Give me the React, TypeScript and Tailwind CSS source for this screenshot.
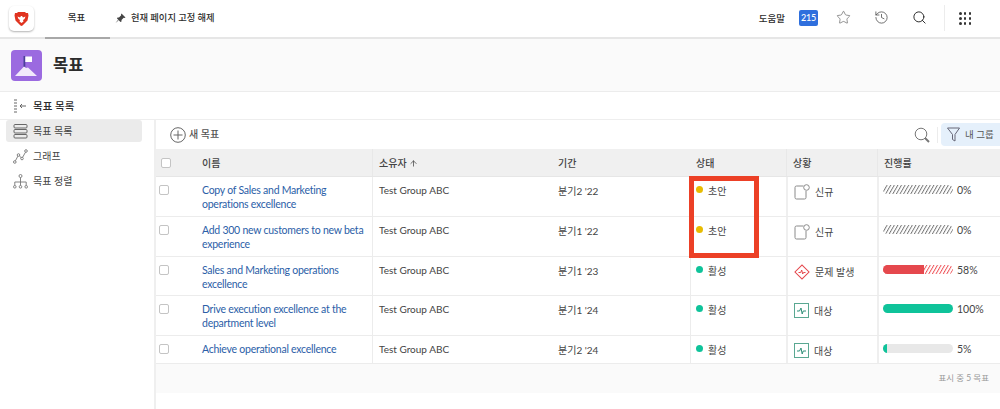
import React from "react";
import { Star, History, Search, ArrowUp } from "lucide-react";

const font = { fontFamily: '"Lato","Noto Sans CJK KR",sans-serif' };

const rows = [
  { name: ["Copy of Sales and Marketing", "operations excellence"], period: "분기2 '22", status: "초안", dot: "bg-[#e8bc00]", cond: "new", condText: "신규", pct: 0, h: "h-[40px]" },
  { name: ["Add 300 new customers to new beta", "experience"], period: "분기1 '22", status: "초안", dot: "bg-[#e8bc00]", cond: "new", condText: "신규", pct: 0, h: "h-[40px]" },
  { name: ["Sales and Marketing operations", "excellence"], period: "분기1 '23", status: "활성", dot: "bg-[#0fc39a]", cond: "risk", condText: "문제 발생", pct: 58, h: "h-[39px]" },
  { name: ["Drive execution excellence at the", "department level"], period: "분기1 '24", status: "활성", dot: "bg-[#0fc39a]", cond: "target", condText: "대상", pct: 100, h: "h-[40px]" },
  { name: ["Achieve operational excellence"], period: "분기2 '24", status: "활성", dot: "bg-[#0fc39a]", cond: "target", condText: "대상", pct: 5, h: "h-[28px]" },
];

function Cond({ kind }: { kind: string }) {
  if (kind === "new")
    return (
      <svg width="16" height="16" viewBox="0 0 16 16" fill="none" stroke="#8a8a8a" strokeWidth="1">
        <path d="M9.500 2H2.500A1.500 1.500 0 0 0 1 3.500v10A1.500 1.500 0 0 0 2.500 15h8a1.500 1.500 0 0 0 1.500-1.500V7" />
        <circle cx="12.500" cy="3.500" r="2.800" fill="#fff" />
      </svg>
    );
  if (kind === "risk")
    return (
      <svg width="16" height="16" viewBox="0 0 16 16" fill="none" stroke="#e5484d" strokeWidth="1">
        <rect x="3" y="3" width="10" height="10" transform="rotate(45 8 8)" />
        <path d="M4.500 8.500h2.200l1-2.500 1 4 .8-1.500h2" />
      </svg>
    );
  return (
    <svg width="15" height="15" viewBox="0 0 15 15" fill="none" stroke="#5aa892" strokeWidth="1">
      <rect x="0.500" y="0.500" width="14" height="14" />
      <path d="M3 8h2.500l1.500-3 1.200 6 1-3H12" stroke="#2f8f78" />
    </svg>
  );
}

function Hatch({ id, color }: { id: string; color: string }) {
  return (
    <svg className="absolute inset-0 w-full h-full" xmlns="http://www.w3.org/2000/svg">
      <defs>
        <pattern id={id} width="3.600" height="9" patternUnits="userSpaceOnUse" patternTransform="skewX(-30)">
          <rect width="1.100" height="9" fill={color} />
        </pattern>
      </defs>
      <rect width="100%" height="100%" fill={`url(#${id})`} />
    </svg>
  );
}

function Progress({ pct, i }: { pct: number; i: number }) {
  return (
    <div className="w-[70px] h-[9px] relative rounded-[5px] overflow-hidden shrink-0">
      {pct === 0 && <Hatch id={`h${i}`} color="#777777" />}
      {pct === 58 && (
        <>
          <Hatch id={`h${i}`} color="#ee4f55" />
          <div className="absolute left-0 top-0 bottom-0 w-[41px] bg-[#e5484d]" />
        </>
      )}
      {pct === 100 && <div className="absolute inset-0 bg-[#0fc39a]" />}
      {pct === 5 && (
        <>
          <div className="absolute inset-0 bg-[#e8e8e8]" />
          <div className="absolute left-0 top-0 bottom-0 w-[4px] bg-[#0fc39a]" />
        </>
      )}
    </div>
  );
}

function Check({ className }: { className: string }) {
  return <div className={`w-[10px] h-[10px] rounded-[2px] border border-[#c4c4c4] bg-white shrink-0 ${className}`} />;
}

export default function App() {
  return (
    <div style={font} className="w-[1000px] h-[409px] bg-white relative overflow-hidden text-[#2c2c2c]">
      {/* top bar */}
      <div className="h-[39px] flex items-stretch border-b-2 border-[#e6e6e6]">
        <div className="w-[45px] flex items-start pl-[9px] pt-[6px]">
          <div className="w-[25px] h-[25px] rounded-[5px] bg-white shadow-[0_1px_2px_rgba(0,0,0,0.3)] flex items-center justify-center">
            <svg width="15" height="16" viewBox="0 0 15 16">
              <path d="M4 1h7l1 1 2 0 .5 2.500-1 5L8.500 14.500 7.500 15l-1-.5L1.500 9.500l-1-5L1 2h2z" fill="#e03420" />
              <path d="M3.500 5.500L6 6.500 7 5l1 0 1 1.500 2.500-1-1 2.500-1.500 1 .5 1.500L7.500 12 5.500 10.500 6 9 4.500 8z" fill="#fff" />
            </svg>
          </div>
        </div>
        <div className="w-[65px] flex justify-center pt-[11px] pr-[2px] border-b-2 -mb-[2px] border-[#a8a8a8] text-[9.500px] font-medium leading-[14px]">목표</div>
        <div className="flex items-start pt-[11px] pl-[5px] gap-[5px] text-[9.250px] font-medium leading-[14px]">
          <svg width="11" height="11" viewBox="0 0 11 11" className="mt-[2px]" fill="#444">
            <path d="M6.500 0.500l4 4-1 .5-.8-.2L6.500 7 6.500 8.500 5.500 9 2 5.500 2.500 4.500 4 4.500 6.200 2.300 6 1.500z" />
            <path d="M3 7l-2.500 3L3.500 7.500z" />
          </svg>
          <span>현재 페이지 고정 해제</span>
        </div>
        <div className="flex-1" />
        <div className="flex items-start pt-[12px] text-[9.500px] font-medium leading-[14px]">도움말</div>
        <div className="w-[19px] h-[16px] ml-[14px] mt-[10px] bg-[#2f6fdd] rounded-[2px] text-white text-[9px] font-medium tracking-[-0.3px] flex items-center justify-center">215</div>
        <Star size={15} strokeWidth={1} className="ml-[18px] mt-[10px] text-[#555]" />
        <History size={15} strokeWidth={1.200} className="ml-[23px] mt-[10px] text-[#444]" />
        <Search size={15} strokeWidth={1.500} className="ml-[23px] mt-[10px] text-[#222]" />
        <div className="w-px h-[26px] bg-[#ececec] ml-[17px] mt-[5px]" />
        <div className="grid grid-cols-3 gap-[2.500px] w-[12px] h-[12px] ml-[14px] mt-[12px] mr-[29px]">
          {Array.from({ length: 9 }).map((_, i) => (
            <span key={i} className="w-[2.500px] h-[2.500px] bg-[#333] rounded-full" />
          ))}
        </div>
      </div>
      {/* title */}
      <div className="h-[53px] bg-[#fafafa] border-b border-[#ececec] flex items-center pl-[11px] gap-[11px]">
        <div className="w-[31px] h-[31px] rounded-[4px] bg-[#9b6ae0] flex items-center justify-center">
          <svg width="25" height="25" viewBox="0 0 25 25">
            <rect x="9.500" y="3" width="1.800" height="11" fill="#4b3f99" />
            <path d="M11.300 3.500h6.700v5.500h-6.700z" fill="#fff" />
            <path d="M1 23l9-9.500 2 1.500 2-.5 9 8.500z" fill="#f1e9fb" />
          </svg>
        </div>
        <div className="text-[16.500px] font-semibold leading-none">목표</div>
      </div>
      {/* crumb */}
      <div className="h-[28px] border-b border-[#eeeeee] flex items-center pl-[14px] gap-[6px]">
        <svg width="13" height="14" viewBox="0 0 13 14" fill="none" stroke="#666" strokeWidth="1">
          <path d="M0 1h3M0 4h3M0 7h3M0 10h3M0 13h3" />
          <path d="M12 7H6M8 5L6 7l2 2" />
        </svg>
        <span className="text-[10.500px] font-medium leading-none mt-[2px]">목표 목록</span>
      </div>
      <div className="flex h-[289px]">
        {/* sidebar */}
        <div className="w-[156px] shrink-0 pl-[6px] pr-[12px] border-r-2 border-[#efefef] text-[10px] text-[#444]">
          <div className="h-[22px] bg-[#ebebeb] rounded-[3px] flex items-center pl-[7px] gap-[5px]">
            <svg width="15" height="15" viewBox="0 0 15 15" fill="none" stroke="#666" strokeWidth="1">
              <rect x="1" y="0.500" width="13" height="3.500" rx="1" />
              <rect x="1" y="5.500" width="13" height="3.500" rx="1" />
              <rect x="1" y="10.500" width="13" height="3.500" rx="1" />
            </svg>
            <span>목표 목록</span>
          </div>
          <div className="h-[26px] mt-px flex items-center pl-[7px] gap-[5px]">
            <svg width="15" height="15" viewBox="0 0 15 15" fill="none" stroke="#777" strokeWidth="0.900">
              <circle cx="1.800" cy="13" r="1.300" />
              <circle cx="5.500" cy="6" r="1.300" />
              <circle cx="9" cy="9.500" r="1.300" />
              <circle cx="13" cy="2" r="1.300" />
              <path d="M2.400 11.800l2.500-4.700M6.400 7l1.800 1.600M9.600 8.300L12.500 3.200" />
            </svg>
            <span>그래프</span>
          </div>
          <div className="h-[25px] flex items-center pl-[7px] gap-[5px]">
            <svg width="15" height="15" viewBox="0 0 15 15" fill="none" stroke="#777" strokeWidth="0.900">
              <circle cx="7.500" cy="2" r="1.500" />
              <circle cx="1.800" cy="12.800" r="1.300" />
              <circle cx="7.500" cy="12.800" r="1.300" />
              <circle cx="13.200" cy="12.800" r="1.300" />
              <path d="M7.500 3.500v8M1.800 11.300V8h11.400v3.300" />
            </svg>
            <span>목표 정렬</span>
          </div>
        </div>
        {/* main */}
        <div className="flex-1 min-w-0 flex flex-col">
          <div className="h-[29px] shrink-0 flex items-center pl-[14px] text-[#555]">
            <svg width="16" height="16" viewBox="0 0 16 16" fill="none" stroke="#666" strokeWidth="1">
              <circle cx="8" cy="8" r="7.300" />
              <path d="M8 3.500v9M3.500 8h9" />
            </svg>
            <span className="text-[10px] font-medium ml-[3px] leading-none -mt-[1px]">새 목표</span>
            <div className="flex-1" />
            <svg width="16" height="16" viewBox="0 0 16 16" fill="none" stroke="#777" strokeWidth="1" className="mr-[7px]">
              <circle cx="7" cy="7" r="5.800" />
              <path d="M11 11l4 4" strokeWidth="2" />
            </svg>
            <div className="w-px h-[16px] bg-[#ececec] mr-[3px]" />
            <div className="w-[59px] h-[23px] bg-[#e5f0fb] rounded-l-[4px] flex items-center pl-[6px] gap-[5px] text-[#555]">
              <svg width="13" height="15" viewBox="0 0 13 15" fill="none" stroke="#667" strokeWidth="1">
                <path d="M0.500 1h12L8 7.500V14L5.500 12.500V7.500z" />
              </svg>
              <span className="text-[9.500px] leading-none">내 그룹</span>
            </div>
          </div>
          <div className="h-[28px] shrink-0 bg-[#f0f0f0] border-b border-[#e6e6e6] flex items-stretch text-[10px] font-medium text-[#444]">
            <div className="w-[216px] flex items-center pl-[5px]">
              <Check className="" />
              <span className="ml-[31px] mt-[2px]">이름</span>
            </div>
            <div className="w-[180px] flex items-center pl-[6px] border-l border-[#e8e8e8] gap-[2px] pt-[2px]">소유자 <ArrowUp size={9} /></div>
            <div className="w-[138px] flex items-center pl-[6px] pt-[2px]">기간</div>
            <div className="w-[96px] flex items-center pl-[6px] pt-[2px]">상태</div>
            <div className="w-[91px] flex items-center pl-[6px] pt-[2px] border-l border-[#e8e8e8]">상황</div>
            <div className="flex-1 flex items-center pl-[6px] pt-[2px] border-l border-[#e8e8e8]">진행률</div>
          </div>
          {rows.map((r, i) => (
            <div key={i} className={`${r.h} shrink-0 flex items-stretch border-b border-[#ececec] text-[10px] text-[#444]`}>
              <div className="w-[216px] pl-[3px] pt-[7px] flex">
                <Check className="mt-[1px]" />
                <div className="ml-[33px] -mt-[1px] text-[10.500px] text-[#2b5ea7] leading-[14px] tracking-[-0.25px] whitespace-nowrap">
                  {r.name.map((n) => (
                    <div key={n}>{n}</div>
                  ))}
                </div>
              </div>
              <div className="w-[180px] pl-[6px] pt-[6px] leading-[14px] border-l border-[#ececec] text-[10px]">Test Group ABC</div>
              <div className="w-[138px] pl-[6px] pt-[7px] leading-[14px]">{r.period}</div>
              <div className="w-[96px] pl-[5px] pt-[7px] leading-[14px] flex items-start border-l border-[#ececec]">
                <span className={`w-[7px] h-[7px] rounded-full mt-[2px] mr-[5px] ${r.dot}`} />
                {r.status}
              </div>
              <div className="w-[91px] pl-[6px] pt-[7px] flex items-start gap-[5px] leading-[14px] border-l-2 border-[#efefef]">
                <Cond kind={r.cond} />
                <span className="mt-[1px]">{r.condText}</span>
              </div>
              <div className="flex-1 pl-[4px] pt-[6px] flex items-start gap-[4px] leading-[14px] text-[10.500px] border-l-2 border-[#efefef]">
                <div className="mt-[2px]"><Progress pct={r.pct} i={i} /></div>
                <span>{r.pct}%</span>
              </div>
            </div>
          ))}
          <div className="h-[29px] shrink-0 bg-[#fafafa] flex items-center justify-end pr-[11px] text-[8.500px] text-[#999]">표시 중 5 목표</div>
        </div>
      </div>
      {/* annotation box */}
      <div className="absolute left-[689px] top-[176px] w-[70px] h-[82px] border-[5px] border-[#ec4026]" />
    </div>
  );
}
